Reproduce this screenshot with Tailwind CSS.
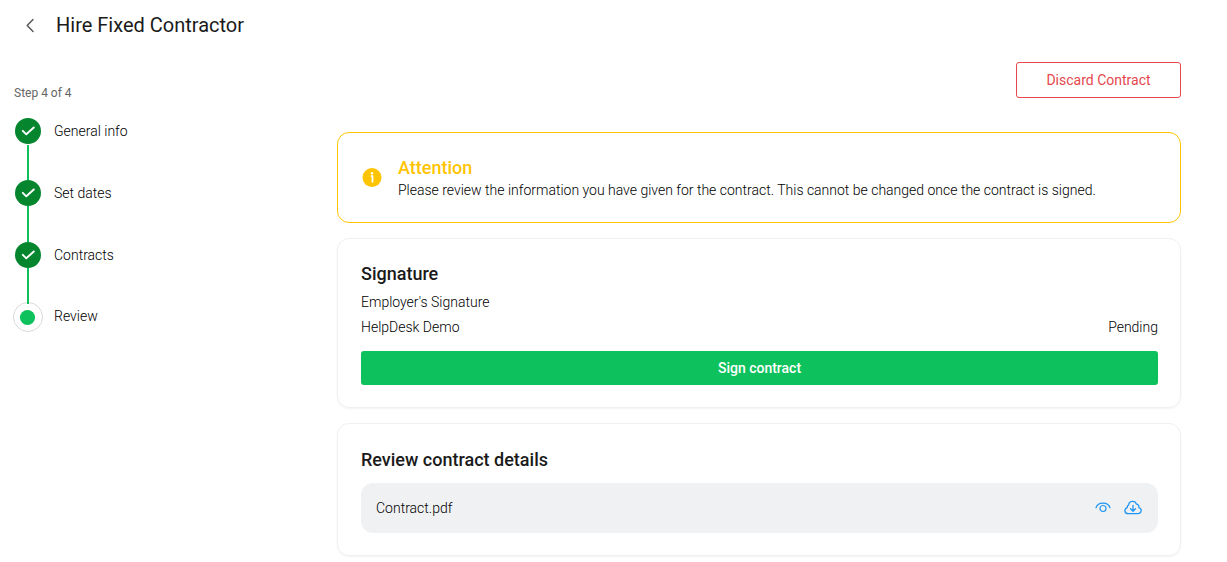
<!DOCTYPE html>
<html lang="en">
<head>
  <meta charset="UTF-8" />
  <meta name="viewport" content="width=device-width, initial-scale=1" />
  <title>Hire Fixed Contractor</title>
  <script src="https://cdn.jsdelivr.net/npm/@tailwindcss/browser@4"></script>
</head>
<body class="bg-white font-[Roboto,sans-serif] text-sm font-light text-black">
  <header class="flex h-[50px] items-center gap-4 pl-5">
    <button type="button" aria-label="Back" class="flex size-5 items-center justify-center">
      <svg class="size-5" viewBox="0 0 20 20" fill="none" stroke="#555" stroke-width="1.4" stroke-linecap="round" stroke-linejoin="round"><path d="M13 4.500 7.200 10.500 13 16.500" /></svg>
    </button>
    <h1 class="text-xl font-normal text-[#1a1a1a]">Hire Fixed Contractor</h1>
  </header>

  <div class="flex pt-3 pr-[46px] pb-1.5 pl-3">
    <!-- steps -->
    <aside class="w-[325px] shrink-0 pt-[22px]">
      <p class="pl-0.5 text-xs leading-[18px] font-normal text-[#666]">Step 4 of 4</p>
      <ol class="pt-4">
        <li class="flex h-[62px] gap-[10px]">
          <div class="flex w-8 flex-col items-center">
            <svg class="size-[26px] shrink-0" viewBox="0 0 26 26" fill="none"><circle cx="13" cy="13" r="13" fill="#05852d" /><path d="m7.800 12.800 3.500 3.500 7.500-6.800" stroke="#fff" stroke-width="1.900" stroke-linecap="round" stroke-linejoin="round" /></svg>
            <span class="mt-px w-0.5 flex-1 bg-[#0dc25c]"></span>
          </div>
          <span class="leading-[26px]">General info</span>
        </li>
        <li class="flex h-[62px] gap-[10px]">
          <div class="flex w-8 flex-col items-center">
            <svg class="size-[26px] shrink-0" viewBox="0 0 26 26" fill="none"><circle cx="13" cy="13" r="13" fill="#05852d" /><path d="m7.800 12.800 3.500 3.500 7.500-6.800" stroke="#fff" stroke-width="1.900" stroke-linecap="round" stroke-linejoin="round" /></svg>
            <span class="w-0.5 flex-1 bg-[#0dc25c]"></span>
          </div>
          <span class="leading-[26px]">Set dates</span>
        </li>
        <li class="flex h-[60px] gap-[10px]">
          <div class="flex w-8 flex-col items-center">
            <svg class="size-[26px] shrink-0" viewBox="0 0 26 26" fill="none"><circle cx="13" cy="13" r="13" fill="#05852d" /><path d="m7.800 12.800 3.500 3.500 7.500-6.800" stroke="#fff" stroke-width="1.900" stroke-linecap="round" stroke-linejoin="round" /></svg>
            <span class="w-0.5 flex-1 bg-[#0dc25c]"></span>
          </div>
          <span class="leading-[26px]">Contracts</span>
        </li>
        <li class="flex gap-[10px]" aria-current="step">
          <div class="flex w-8 justify-center">
            <svg class="size-[30px]" viewBox="0 0 30 30"><circle cx="15" cy="15" r="14.500" fill="#fff" stroke="#d9d9d9" /><path d="M15 0V2" stroke="#0dc25c" stroke-width="2" /><circle cx="14.500" cy="15.500" r="7.600" fill="#0dc25c" /></svg>
          </div>
          <span class="leading-[28px]">Review</span>
        </li>
      </ol>
    </aside>

    <main class="flex min-w-0 flex-1 flex-col">
      <button type="button" class="h-9 w-[165px] self-end rounded-[3px] border border-[#e5484d] font-normal text-[#e5484d]">Discard Contract</button>

      <section class="mt-[34px] flex items-center gap-4 rounded-xl border border-[#ffc400] px-6 py-[22px]">
        <svg class="size-5 shrink-0" viewBox="0 0 20 20" fill="none"><circle cx="10" cy="9.500" r="9.500" fill="#ffc400" /><circle cx="10" cy="5.300" r="1.200" fill="#fff" /><path d="M8.800 8.200H10.500V14.500" stroke="#fff" stroke-width="1.800" /></svg>
        <div>
          <h2 class="text-lg leading-[25px] font-medium text-[#ffc400]">Attention</h2>
          <p class="leading-5">Please review the information you have given for the contract. This cannot be changed once the contract is signed.</p>
        </div>
      </section>

      <section class="mt-[15px] rounded-xl border border-[#f0f0f0] pt-[22px] pr-[22px] pb-[22px] pl-[23px] shadow-xs">
        <h2 class="text-lg leading-[26px] font-medium text-[#1a1a1a]">Signature</h2>
        <p class="pt-[3px] leading-[25px]">Employer's Signature</p>
        <div class="flex justify-between leading-[25px]">
          <span>HelpDesk Demo</span>
          <span>Pending</span>
        </div>
        <button type="button" class="mt-[11px] h-[34px] w-full rounded-[3px] bg-[#0dc25c] font-medium text-white">Sign contract</button>
      </section>

      <section class="mt-[15px] rounded-xl border border-[#f0f0f0] pt-[22px] pr-[22px] pb-[22px] pl-[23px] shadow-xs">
        <h2 class="text-lg leading-7 font-medium text-[#1a1a1a]">Review contract details</h2>
        <div class="mt-[9px] flex h-[50px] items-center rounded-xl bg-[#f0f1f3] pr-4 pl-[15px]">
          <span class="flex-1">Contract.pdf</span>
          <div class="flex gap-3">
            <button type="button" aria-label="View" class="size-[18px]">
              <svg viewBox="0 0 18 18" fill="none" stroke="#2196f3" stroke-width="1.200" stroke-linecap="round"><path d="M2 8.800C4 2.600 14 2.600 16 8.800" /><circle cx="9" cy="9.500" r="3" /></svg>
            </button>
            <button type="button" aria-label="Download" class="size-[18px]">
              <svg viewBox="0 0 18 18" fill="none" stroke="#2196f3" stroke-width="1.300" stroke-linecap="round" stroke-linejoin="round"><path d="M4.300 14.700H13.700C17.800 14.700 18.300 9.600 14.900 8.600Q15.100 5.300 12.500 5.200C11.200 1 4.800 1.400 4.600 6.200Q2.800 6.900 3.300 8.700C-.2 9.700.300 14.700 4.300 14.700Z" /><path d="M9 6.500V12M6.500 9.700 9 12.200 11.500 9.700" /></svg>
            </button>
          </div>
        </div>
      </section>
    </main>
  </div>
</body>
</html>
